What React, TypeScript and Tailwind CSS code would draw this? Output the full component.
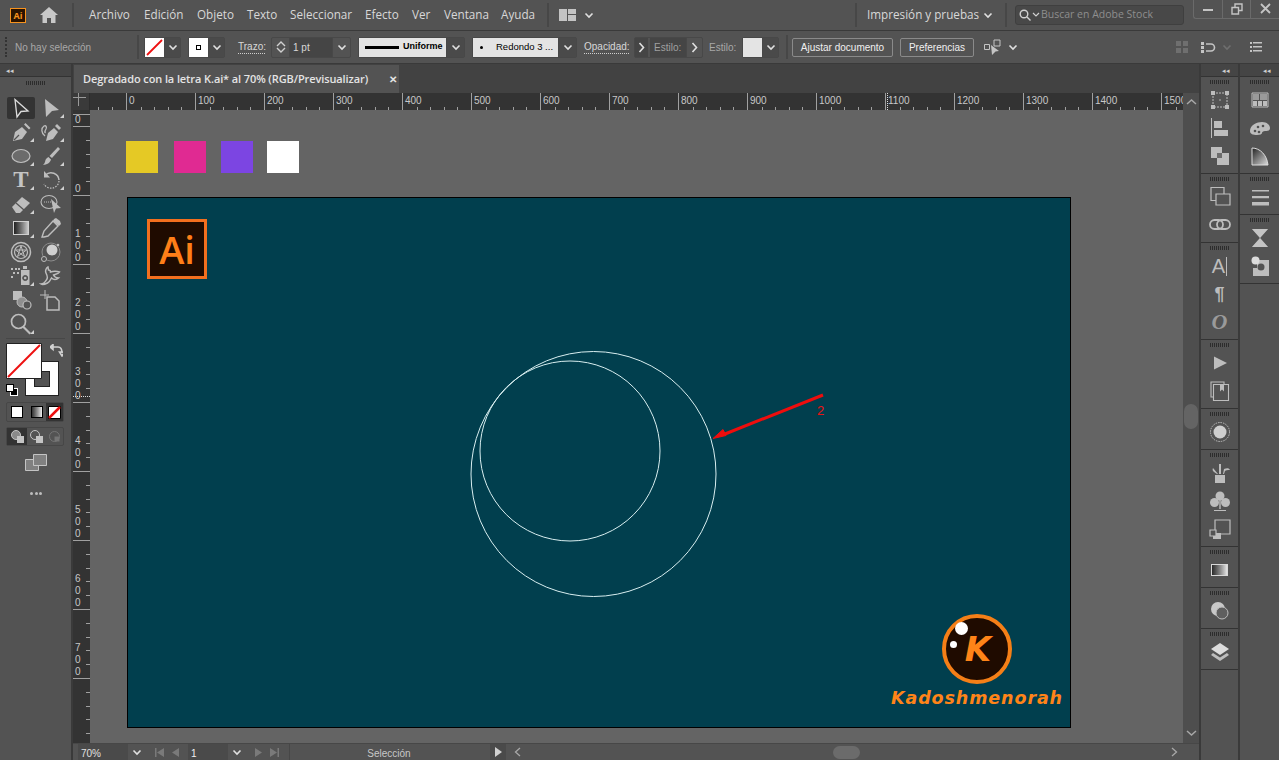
import type { ReactNode } from "react";

const G = "#bdbdbd";

const Chev = ({ color = "#e0e0e0" }: { color?: string }) => (
  <svg width="12" height="12" viewBox="0 0 12 12" fill="none" stroke={color} strokeWidth="1.6">
    <path d="M2.5 4.5 6 8l3.5-3.5" />
  </svg>
);

const Ico = ({ children, size = 24 }: { children: ReactNode; size?: number }) => (
  <svg width={size} height={size} viewBox="0 0 24 24" fill={G} stroke="none">
    {children}
  </svg>
);

const Grip = () => (
  <div className="flex justify-center gap-[1px] h-[9px] items-center shrink-0">
    {[0, 1, 2, 3, 4, 5, 6, 7, 8, 9].map((i) => (
      <span key={i} className="w-[1px] h-[4px] bg-[#2c2c2c]" />
    ))}
  </div>
);

const Sep = () => <div className="w-[2px] h-[24px] bg-[#474747] shrink-0" />;

// swatch + chevron dropdown of the control bar
const Drop = ({ className, children }: { className: string; children: ReactNode }) => (
  <div className={`flex h-[21px] border border-[#484848] rounded-[2px] shrink-0 ${className}`}>
    {children}
    <div className="w-[18px] flex items-center justify-center bg-[#4a4a4a] border-l border-[#484848]">
      <Chev />
    </div>
  </div>
);

const tools: { icon: ReactNode; tri?: boolean; active?: boolean }[] = [
  {
    active: true,
    icon: (
      <Ico>
        <path d="M6 3.5 19 15l-7 .5L8 21Z" fill="#333" stroke="#dcdcdc" strokeWidth="1.3" />
      </Ico>
    ),
  },
  { tri: true, icon: <Ico><path d="M6 3 20 14l-7 1-6 6Z" /></Ico> },
  {
    tri: true,
    icon: (
      <Ico>
        <path d="M4 21 6 12l7-5 5 5-5 7Z" />
        <path d="m15 4.500 1.500-1.500 5 5-1.500 1.500Z" />
        <path d="m5 20 5-5" stroke="#535353" strokeWidth="1.2" />
      </Ico>
    ),
  },
  {
    tri: true,
    icon: (
      <Ico>
        <path d="M7 21 9 13l6-5 4 4-5 7Z" />
        <path d="m16 6 2-2 4 4-2 2Z" />
        <path d="M6 16C2 13 2 8 5 6c2-1 3 1 2 3-1 1.500-2 3-.5 4" fill="none" stroke={G} strokeWidth="1.3" />
      </Ico>
    ),
  },
  {
    tri: true,
    icon: (
      <Ico>
        <ellipse cx="12" cy="12" rx="9" ry="6.500" fill="#6b6b6b" stroke={G} strokeWidth="1.2" />
      </Ico>
    ),
  },
  {
    tri: true,
    icon: (
      <Ico>
        <path d="M19 3 21 5 13 14 10.500 12Z" />
        <path d="M9.500 13 12 15.500C11 19 8 20.500 4 21c2-2 2-3 2.500-5 .5-1.500 2-2.500 3-3Z" />
      </Ico>
    ),
  },
  {
    tri: true,
    icon: (
      <span className="font-['Liberation_Serif',serif] font-bold text-[23px] leading-[24px] text-[#c4c4c4] w-6 text-center block">
        T
      </span>
    ),
  },
  {
    tri: true,
    icon: (
      <Ico>
        <path d="M6.500 7A8 8 0 0 1 20 12" fill="none" stroke={G} strokeWidth="1.500" />
        <path d="M20 13a8 8 0 0 1-15 3" fill="none" stroke={G} strokeWidth="1.300" strokeDasharray="1.500 1.300" />
        <path d="M5 3v6.500h6Z" />
      </Ico>
    ),
  },
  {
    tri: true,
    icon: (
      <Ico>
        <path d="m3 15 10-10 8 6-10 10H7Z" />
        <path d="m7 11 8 7" stroke="#535353" strokeWidth="1.2" />
      </Ico>
    ),
  },
  {
    icon: (
      <Ico>
        <ellipse cx="10" cy="10" rx="8" ry="6.500" fill="none" stroke={G} strokeWidth="1.1" />
        <path d="M5 10h9" stroke={G} strokeDasharray="1 1" />
        <path d="m12 7 10 9-5 .5L15 21Z" />
      </Ico>
    ),
  },
  {
    tri: true,
    icon: (
      <div className="w-[16px] h-[14px] mx-[4px] border border-[#d0d0d0] bg-gradient-to-r from-[#222222] to-[#c8c8c8]" />
    ),
  },
  {
    icon: (
      <Ico>
        <path d="m14 5 5 5L9 20l-4 1-2 0 1-3 1-3Z" fill="none" stroke={G} strokeWidth="1.4" />
        <path d="m15 3 2-1 4 3 1 3-2 2-6-5Z" />
      </Ico>
    ),
  },
  {
    icon: (
      <Ico>
        <circle cx="12" cy="12" r="9.500" fill="none" stroke={G} strokeWidth="1.5" />
        <circle cx="12" cy="12" r="6.500" fill="none" stroke={G} strokeWidth="1.2" />
        <path d="m12 6 3.500 10.500L6.500 10h11l-9 6.500Z" fill="none" stroke={G} strokeWidth="1" />
      </Ico>
    ),
  },
  {
    icon: (
      <Ico>
        <circle cx="12" cy="12" r="9" fill="none" stroke="#8c8c8c" strokeWidth="1" />
        <circle cx="13" cy="10" r="5.500" fill="#cfcfcf" />
        <circle cx="5" cy="19" r="2.500" fill="#535353" stroke={G} />
        <circle cx="19" cy="5" r="1.300" />
      </Ico>
    ),
  },
  {
    tri: true,
    icon: (
      <Ico>
        <path d="M14 2h4v3h-4Z" />
        <path d="M12 6h8.500v15H12Z" />
        <circle cx="16.200" cy="14" r="2.500" fill="#535353" stroke="#535353" />
        <circle cx="16.200" cy="14" r="1.300" />
        <path d="M2 4h2v2H2Zm4 0h2v2H6Zm3 0h2v2H9ZM4 8h2v2H4Zm4 0h2v2H8ZM2 12h2v2H2Z" />
      </Ico>
    ),
  },
  {
    icon: (
      <Ico>
        <path
          d="M2 20c3 0 4-2 6-5 1-2 0-4-1-6-1-2 0-5 2-6l.5 3c1 0 2 1 2 2 3-1 6-1 9 0-1 2-4 2-6 3 1 2 3 3 5 3-2 2-5 2-7 0-1 2-2 4-4 5-2 1-5 2-6.500 1Z"
          fill="none"
          stroke={G}
          strokeWidth="1.500"
        />
      </Ico>
    ),
  },
  {
    icon: (
      <Ico>
        <path d="M4 3h9v9H4Z" />
        <circle cx="13" cy="14" r="5" fill="#8f8f8f" stroke={G} />
        <circle cx="18" cy="17" r="4" fill="#535353" stroke={G} strokeWidth="1.200" />
      </Ico>
    ),
  },
  {
    icon: (
      <Ico>
        <path d="M8 9h8l4 4v9H8Z" fill="none" stroke={G} strokeWidth="1.500" />
        <path d="M1 7h9M6 2v9" stroke={G} strokeWidth="1" fill="none" />
      </Ico>
    ),
  },
  {
    tri: true,
    icon: (
      <Ico>
        <circle cx="9.500" cy="9.500" r="7" fill="none" stroke={G} strokeWidth="1.700" />
        <path d="m15 14 7 7-1.500 1.500-7-7Z" />
      </Ico>
    ),
  },
];

const panelOne: ReactNode[][] = [
  [
    <Ico key="tr">
      <path d="M5 5h14v14H5Z" fill="none" stroke={G} strokeWidth="1" strokeDasharray="2 1" />
      <path d="M3 3h4v4H3Zm14 0h4v4h-4ZM3 17h4v4H3Zm14 0h4v4h-4Z" />
      <circle cx="12" cy="12" r="0.800" />
    </Ico>,
    <Ico key="al">
      <path d="M3 2h1v20H3Z" />
      <path d="M6 5h8v7H6Zm0 9h14v6H6Z" />
    </Ico>,
    <Ico key="pf">
      <path d="M3 3h11v11H3Z" />
      <path d="M9 9h12v12H9Z" fill="#bdbdbd" />
      <path d="M9 9h5v5H9Z" fill="#6d6d6d" />
    </Ico>,
  ],
  [
    <Ico key="ap">
      <path d="M3 2.500h13v13H3Z" fill="none" stroke={G} strokeWidth="1.200" />
      <path d="M8 9h14v11H8Z" fill="#535353" stroke={G} strokeWidth="1.200" />
    </Ico>,
    <Ico key="ln">
      <rect x="2" y="7" width="13" height="9" rx="4.500" fill="none" stroke={G} strokeWidth="1.800" />
      <rect x="9" y="7" width="13" height="9" rx="4.500" fill="none" stroke={G} strokeWidth="1.800" />
    </Ico>,
  ],
  [
    <div key="a" className="flex items-center justify-center w-6 h-6">
      <span className="font-['Liberation_Sans',sans-serif] text-[20px] leading-none text-[#bdbdbd]">A</span>
      <span className="w-[1px] h-[19px] bg-[#bdbdbd] ml-[1px]" />
    </div>,
    <span key="p" className="font-['Liberation_Sans',sans-serif] font-bold text-[18px] leading-[24px] text-[#bdbdbd] w-6 text-center block">
      ¶
    </span>,
    <span key="o" className="font-['Liberation_Serif',serif] italic font-bold text-[22px] leading-[24px] text-[#9a9a9a] w-6 text-center block">
      O
    </span>,
  ],
  [
    <Ico key="pl">
      <path d="M6 5.500 19 12 6 18.500Z" />
    </Ico>,
    <Ico key="ab">
      <path d="M3 3h13v15H3Z" fill="none" stroke={G} strokeWidth="1.100" />
      <path d="M5.500 5.500h15v16h-15Z" fill="#535353" stroke={G} strokeWidth="1.100" />
      <path d="M12 5.500h4v7l-2-2-2 2Z" />
    </Ico>,
  ],
  [
    <Ico key="dc">
      <circle cx="12" cy="12" r="6.500" fill="#cfcfcf" />
      <circle cx="12" cy="12" r="9.500" fill="none" stroke={G} strokeDasharray="1.500 1" />
    </Ico>,
  ],
  [
    <Ico key="br">
      <path d="M7 14h10v8H7Z" />
      <path d="M11 13V3h2v10Zm-1 0L5 7c-1 2 0 3 1 4l3 2Zm5 0 1-5c3-1 5-1 6 1-3 0-4 0-5 1l-1 3Z" />
    </Ico>,
    <Ico key="cl">
      <circle cx="12" cy="7" r="4.500" />
      <circle cx="6.500" cy="13.500" r="4.500" />
      <circle cx="17.500" cy="13.500" r="4.500" />
      <path d="M11.300 10h1.400v10h-1.400ZM6 21h12v1H6Z" />
    </Ico>,
    <Ico key="ar">
      <path d="M7 3h15v14H7Z" fill="none" stroke={G} strokeWidth="1.200" />
      <path d="M5 16h8v6H5Z" fill={G} />
      <path d="M2 13h6v6H2Z" fill="#535353" stroke={G} strokeWidth="1.200" />
    </Ico>,
  ],
  [
    <div key="gr" className="w-[17px] h-[12px] mx-[3.500px] border border-[#d8d8d8] bg-gradient-to-r from-[#2a2a2a] to-[#e4e4e4]" />,
  ],
  [
    <Ico key="tp">
      <circle cx="10" cy="10" r="7" fill="#c8c8c8" />
      <circle cx="14" cy="14" r="6" fill="#5f5f5f" stroke={G} strokeWidth="1" />
    </Ico>,
  ],
  [
    <Ico key="ly">
      <path d="m12 3 9 6-9 6-9-6Z" fill="#dcdcdc" />
      <path d="m5 13-2 2 9 6 9-6-2-2-7 4.500Z" />
    </Ico>,
  ],
];

const panelTwo: ReactNode[][] = [
  [
    <Ico key="sw">
      <path d="M4 5h16v14H4Z" fill="none" stroke={G} />
      <path d="M5 6h6v6H5Zm7 0h7v6h-7Z" fill="#9a9a9a" />
      <path d="M5 13h4v5H5Zm5 0h4v5h-4Zm5 0h4v5h-4Z" />
    </Ico>,
    <Ico key="pa">
      <path d="M2 15c0-6 7-9 12-9 5 0 8 3 8 6 0 3-3 3-5 3-2 0-3 1-3 2s-2 2-5 2c-4 0-7-1-7-4Z" />
      <circle cx="7" cy="15" r="1.300" fill="#535353" />
      <circle cx="10" cy="11" r="1.300" fill="#535353" />
      <circle cx="15" cy="10" r="1.300" fill="#535353" />
      <circle cx="11" cy="16" r="1.300" fill="#535353" />
    </Ico>,
    <svg key="cg" width="24" height="24" viewBox="0 0 24 24">
      <defs>
        <linearGradient id="cg1" x1="0" y1="0" x2="1" y2="1">
          <stop offset="0" stopColor="#202020" />
          <stop offset="1" stopColor="#dddddd" />
        </linearGradient>
      </defs>
      <path d="M4 4c8 0 15 7 16 17H4Z" fill="url(#cg1)" stroke="#dddddd" strokeWidth="1" />
    </svg>,
  ],
  [
    <Ico key="st">
      <path d="M4 5h17v1.500H4Zm0 6h17v2.200H4Zm0 6h17v3.500H4Z" />
    </Ico>,
  ],
  [
    <Ico key="hg">
      <path d="M4 3h16v18H4Z" fill="#8a8a8a" />
      <path d="m4 3 8 9-8 9Zm16 0-8 9 8 9Z" fill="#535353" />
      <path d="M4 3h16l-8 9Zm0 18h16l-8-9Z" fill="#c4c4c4" />
    </Ico>,
    <Ico key="om">
      <path d="M9 6h12v16H5v-8h4Z" />
      <circle cx="7.500" cy="6.500" r="4" fill="#dcdcdc" />
      <circle cx="13" cy="13" r="3.500" fill="#535353" />
    </Ico>,
  ],
];

const PanelCol = ({ groups }: { groups: ReactNode[][] }) => (
  <div className="w-[39px] flex flex-col">
    <div className="h-[13px] shrink-0 flex items-center justify-end pr-2 bg-[#454545] text-[#cfcfcf] text-[7px] leading-none border-b border-[#333333]">
      ◂◂
    </div>
    {groups.map((g, i) => (
      <div key={i} className="border-b border-[#333333] flex flex-col items-center shrink-0 pb-[3px]">
        <Grip />
        {g.map((ic, k) => (
          <div key={k} className="h-[28px] w-full flex items-center justify-center">
            {ic}
          </div>
        ))}
      </div>
    ))}
  </div>
);

const hLabels = [0, 100, 200, 300, 400, 500, 600, 700, 800, 900, 1000, 1100, 1200, 1300, 1400, 1500];
const vLabels = ["0", "100", "200", "300", "400", "500", "600", "700", ""];

export default function App() {
  return (
    <div className="w-[1279px] h-[760px] flex flex-col bg-[#535353] overflow-hidden text-[#d8d8d8] font-['Open_Sans',sans-serif]">
      {/* menu */}
      <div className="h-[31px] flex items-center pl-[10px] border-b border-[#3a3a3a] shrink-0 text-[11.7px] whitespace-nowrap relative">
        <div className="w-[16px] h-[15px] border border-[#f7931e] bg-[#2a1300] text-[#f7931e] text-[9px] font-bold leading-[13px] text-center">Ai</div>
        <svg className="ml-[14px]" width="18" height="16" viewBox="0 0 18 16" fill="#c8c8c8">
          <path d="M9 0 18 8h-2.500v8H11v-5H7v5H2.500V8H0Z" />
        </svg>
        <div className="ml-[14px] mr-[15px]"><Sep /></div>
        <div className="w-[55px]">Archivo</div>
        <div className="w-[53px]">Edición</div>
        <div className="w-[50px]">Objeto</div>
        <div className="w-[43px]">Texto</div>
        <div className="w-[75px]">Seleccionar</div>
        <div className="w-[47px]">Efecto</div>
        <div className="w-[32px]">Ver</div>
        <div className="w-[57px]">Ventana</div>
        <div className="w-[46px]">Ayuda</div>
        <Sep />
        <svg className="ml-[10px]" width="17" height="12" viewBox="0 0 17 12" fill="#c4c4c4">
          <path d="M0 0h8v12H0Zm9 0h8v5H9Zm0 6h8v6H9Z" />
        </svg>
        <div className="ml-[7px]"><Chev /></div>
        <div className="flex-1" />
        <Sep />
        <div className="ml-[10px] w-[109px]">Impresión y pruebas</div>
        <div className="ml-[6px]"><Chev /></div>
        <div className="ml-[11px]"><Sep /></div>
        <div className="ml-[8px] w-[169px] h-[20px] flex items-center gap-[1px] pl-[3px] bg-[#484848] border border-[#3f3f3f] rounded-[3px] text-[#8e8e8e] text-[10.500px]">
          <svg width="12" height="12" viewBox="0 0 12 12" fill="none" stroke="#d0d0d0" strokeWidth="1.400"><circle cx="5" cy="5" r="3.800" /><path d="m8 8 3.500 3.500" /></svg>
          <svg width="8" height="8" viewBox="0 0 8 8" fill="none" stroke="#d0d0d0" strokeWidth="1.200"><path d="m1 2 3 3 3-3" /></svg>
          Buscar en Adobe Stock
        </div>
        <div className="ml-[9px] mb-[12px] w-[86px] h-[19px] flex border border-t-0 border-r-0 border-[#6a6a6a] rounded-bl-[3px]">
          <div className="flex-1 flex items-center justify-center border-r border-[#6a6a6a]"><div className="w-[10px] h-[2px] mt-[3px] bg-[#c4c4c4]" /></div>
          <div className="flex-1 flex items-center justify-center border-r border-[#6a6a6a]">
            <svg width="12" height="12" viewBox="0 0 12 12" fill="none" stroke="#c4c4c4" strokeWidth="1.400"><path d="M1 4.500h6.500V11H1ZM4 4V1h7v6.500H8" /></svg>
          </div>
          <div className="flex-1 flex items-center justify-center">
            <svg width="11" height="11" viewBox="0 0 11 11" fill="none" stroke="#c4c4c4" strokeWidth="1.800"><path d="m1 1 9 9M10 1l-9 9" /></svg>
          </div>
        </div>
      </div>

      {/* control bar */}
      <div className="h-[33px] flex items-center pl-[5px] border-b border-[#3a3a3a] shrink-0 text-[10px] whitespace-nowrap font-['Liberation_Sans',sans-serif]">
        <div className="w-[2px] h-[20px] border-l-2 border-dotted border-[#333333]" />
        <div className="ml-[8px] w-[122px] text-[#a8a8a8]">No hay selección</div>
        <Sep />
        <Drop className="ml-[5px] w-[37px]">
          <svg className="shrink-0" width="19" height="19" viewBox="0 0 19 19"><path d="M0 0h19v19H0Z" fill="#fff" /><path d="M2 17 17 2" stroke="#ee1111" strokeWidth="1.800" /></svg>
        </Drop>
        <Drop className="ml-[7px] w-[37px]">
          <div className="w-[19px] h-[19px] bg-white flex items-center justify-center shrink-0">
            <div className="w-[5px] h-[5px] border border-black" />
          </div>
        </Drop>
        <div className="ml-[13px] w-[27px] border-b border-dotted border-[#cfcfcf] leading-[12px]">Trazo:</div>
        <div className="ml-[6px] w-[80px] h-[21px] flex border border-[#484848] rounded-[2px] shrink-0">
          <div className="w-[18px] flex flex-col items-center justify-center border-r border-[#484848] -space-y-[2px]">
            <svg width="10" height="8" viewBox="0 0 10 8" fill="none" stroke="#d0d0d0" strokeWidth="1.400"><path d="m1 6 4-4 4 4" /></svg>
            <svg width="10" height="8" viewBox="0 0 10 8" fill="none" stroke="#d0d0d0" strokeWidth="1.400"><path d="m1 2 4 4 4-4" /></svg>
          </div>
          <div className="flex-1 pl-[3px] bg-[#454545] leading-[19px]">1 pt</div>
          <div className="w-[18px] flex items-center justify-center border-l border-[#484848]"><Chev /></div>
        </div>
        <Drop className="ml-[7px] w-[107px]">
          <div className="flex-1 bg-[#e4e4e4] flex items-center pl-[6px] gap-[4px] text-black font-bold text-[9px]">
            <div className="w-[34px] h-[3px] bg-black" />
            Uniforme
          </div>
        </Drop>
        <Drop className="ml-[7px] w-[105px]">
          <div className="flex-1 bg-[#e4e4e4] flex items-center pl-[7px] text-black text-[9.500px]">
            <div className="w-[3px] h-[3px] rounded-full bg-black mr-[13px]" />
            Redondo 3 ...
          </div>
        </Drop>
        <div className="ml-[7px] w-[45px] border-b border-dotted border-[#cfcfcf] leading-[12px]">Opacidad:</div>
        <div className="ml-[5px] w-[69px] h-[21px] flex items-center border border-[#484848] rounded-[2px] shrink-0">
          <div className="w-[13px] h-full bg-[#454545] flex items-center justify-center">
            <svg width="7" height="11" viewBox="0 0 7 11" fill="none" stroke="#e0e0e0" strokeWidth="1.600"><path d="m1.500 1 4 4.500-4 4.500" /></svg>
          </div>
          <div className="w-[38px] h-full bg-[#454545] border-l-2 border-[#535353] text-[#a0a0a0] pl-[4px] leading-[19px]">Estilo:</div>
          <div className="flex-1 flex items-center justify-center border-l border-[#484848] h-full">
            <svg width="7" height="11" viewBox="0 0 7 11" fill="none" stroke="#e0e0e0" strokeWidth="1.600"><path d="m1.500 1 4 4.500-4 4.500" /></svg>
          </div>
        </div>
        <div className="ml-[6px] w-[26px] text-[#a8a8a8]">Estilo:</div>
        <Drop className="ml-[7px] w-[37px]">
          <div className="w-[19px] bg-[#e4e4e4] shrink-0" />
        </Drop>
        <div className="ml-[7px]"><Sep /></div>
        <div className="ml-[4px] w-[101px] h-[19px] border border-[#8a8a8a] rounded-[2px] text-center leading-[17px] text-[#f0f0f0] shrink-0">Ajustar documento</div>
        <div className="ml-[7px] w-[74px] h-[19px] border border-[#8a8a8a] rounded-[2px] text-center leading-[17px] text-[#f0f0f0] shrink-0">Preferencias</div>
        <svg className="ml-[10px]" width="17" height="18" viewBox="0 0 17 18" fill="none" stroke="#c4c4c4">
          <path d="M0.500 6.500h5v5h-5ZM10 2h6v6h-6Z" />
          <path d="m7 7 8 6-3.500.5L8 17Z" fill="#c4c4c4" stroke="none" />
        </svg>
        <div className="ml-[6px]"><Chev /></div>
        <div className="flex-1" />
        <svg width="12" height="12" viewBox="0 0 12 12" fill="#6f6f6f"><path d="M0 0h5v5H0Zm7 0h5v5H7ZM0 7h5v5H0Zm7 0h5v5H7Z" /></svg>
        <svg className="ml-[13px]" width="15" height="13" viewBox="0 0 15 13" fill="#c4c4c4"><path d="M0 1h3v3H0Zm0 4h3v3H0Zm0 4h3v3H0Z" /><path d="M5 3h5a3.500 3.500 0 0 1 0 7H5" fill="none" stroke="#c4c4c4" strokeWidth="1.600" /></svg>
        <div className="ml-[5px]"><Chev color="#6f6f6f" /></div>
        <svg className="ml-[17px] mr-[17px]" width="12" height="10" viewBox="0 0 12 10" fill="#c4c4c4"><path d="M0 0h2v2H0Zm3 0h9v1.500H3ZM0 4h2v2H0Zm3 0h9v1.500H3ZM0 8h2v2H0Zm3 0h9v1.500H3Z" /></svg>
      </div>

      <div className="flex-1 flex min-h-0">
        {/* tools */}
        <div className="w-[73px] shrink-0 flex flex-col border-r-2 border-[#3a3a3a] bg-[#535353]">
          <div className="h-[13px] shrink-0 flex items-center pl-[6px] bg-[#454545] text-[#cfcfcf] text-[7px] leading-none border-b border-[#333333]">◂◂</div>
          <div className="h-[19px] shrink-0 pt-[1px]"><Grip /></div>
          <div className="grid grid-cols-[30px_30px] pl-[6px] auto-rows-[24px]">
            {tools.map((t, i) => (
              <div key={i} className="relative flex items-center justify-center">
                {t.active && <div className="absolute left-[1px] top-[1px] w-[28px] h-[22px] bg-[#333333] rounded-[2px]" />}
                <div className="relative">{t.icon}</div>
                {t.tri && <div className="absolute right-[2px] bottom-[2px] w-0 h-0 border-l-[4px] border-l-transparent border-b-[4px] border-b-[#d0d0d0]" />}
              </div>
            ))}
          </div>
          <div className="mt-[2px] mx-[6px] h-[1px] bg-[#474747]" />
          {/* fill / stroke */}
          <div className="relative h-[58px] mt-[4px] shrink-0">
            <div className="absolute left-[25px] top-[18px] w-[34px] h-[35px] bg-white border border-[#222222] flex items-center justify-center">
              <div className="w-[16px] h-[16px] bg-[#535353] border border-[#222222]" />
            </div>
            <svg className="absolute left-[6px] top-0" width="36" height="36" viewBox="0 0 36 36">
              <path d="M.5.500h35v35H.500Z" fill="#fff" stroke="#222" />
              <path d="M2 34 34 2" stroke="#ee1111" strokeWidth="2" />
            </svg>
            <svg className="absolute left-[50px] top-[1px]" width="13" height="13" viewBox="0 0 13 13" fill="none" stroke="#d0d0d0" strokeWidth="1.600">
              <path d="M1 3h7c3 0 4 2 4 6M0 3l3-2.500V5.500ZM9.500 8h5L12 12Z" />
            </svg>
            <div className="absolute left-[6px] top-[41px] w-[12px] h-[12px]">
              <div className="absolute right-0 bottom-0 w-[8px] h-[8px] bg-black border border-white" />
              <div className="absolute left-0 top-0 w-[8px] h-[8px] bg-white border border-black" />
            </div>
          </div>
          <div className="mt-[1px] ml-[6px] w-[58px] h-[20px] flex border border-[#474747] rounded-[2px] shrink-0">
            <div className="w-[20px] flex items-center justify-center">
              <div className="w-[12px] h-[12px] bg-white border border-black" />
            </div>
            <div className="w-[19px] flex items-center justify-center">
              <div className="w-[12px] h-[12px] border border-black bg-gradient-to-r from-[#333333] to-[#eeeeee]" />
            </div>
            <div className="flex-1 flex items-center justify-center bg-[#333333]">
              <svg width="13" height="13" viewBox="0 0 13 13"><path d="M.5.500h12v12H.500Z" fill="#fff" stroke="#000" /><path d="M1 12 12 1" stroke="#ee1111" strokeWidth="2.500" /></svg>
            </div>
          </div>
          <div className="mt-[5px] ml-[6px] w-[58px] h-[19px] flex border border-[#474747] rounded-[2px] shrink-0">
            <div className="w-[20px] flex items-center justify-center bg-[#333333]">
              <svg width="13" height="13" viewBox="0 0 13 13"><circle cx="5" cy="5" r="4.500" fill="#8a8a8a" stroke="#c4c4c4" /><path d="M6 6h7v7H6Z" fill="#c4c4c4" /></svg>
            </div>
            <div className="w-[19px] flex items-center justify-center">
              <svg width="13" height="13" viewBox="0 0 13 13"><circle cx="5" cy="5" r="4.500" fill="none" stroke="#c4c4c4" /><path d="M6 6h7v7H6Z" fill="#c4c4c4" /></svg>
            </div>
            <div className="flex-1 flex items-center justify-center">
              <svg width="11" height="11" viewBox="0 0 11 11"><circle cx="5.500" cy="5.500" r="5" fill="none" stroke="#757575" /><path d="M5.500 5.500h5v5h-5Z" fill="#757575" /></svg>
            </div>
          </div>
          <svg className="mt-[8px] ml-[25px] shrink-0" width="22" height="17" viewBox="0 0 22 17" fill="#808080" stroke="#c4c4c4" strokeWidth="1">
            <path d="M.5 5.500h13v11H.500Z" />
            <path d="M8.500.5h13v11h-13Z" />
          </svg>
          <div className="mt-[21px] ml-[30px] flex gap-[1.500px] shrink-0">
            <span className="w-[3px] h-[3px] rounded-full bg-[#bdbdbd]" />
            <span className="w-[3px] h-[3px] rounded-full bg-[#bdbdbd]" />
            <span className="w-[3px] h-[3px] rounded-full bg-[#bdbdbd]" />
          </div>
        </div>

        {/* document */}
        <div className="flex-1 min-w-0 flex flex-col bg-[#424242]">
          <div className="h-[29px] pt-[1px] pl-[1px] flex shrink-0">
            <div className="w-[325px] h-[28px] bg-[#535353] flex items-center pl-[9px] text-[11px] font-semibold tracking-[-0.1px] text-[#e4e4e4]">
              <span className="w-[306px] whitespace-nowrap">Degradado con la letra K.ai* al 70% (RGB/Previsualizar)</span>
              <span className="text-[10px] font-bold leading-none">✕</span>
            </div>
          </div>

          {/* horizontal ruler */}
          <div className="h-[17px] flex shrink-0">
            <div className="w-[17px] bg-[#3a3a3a] relative border-r border-[#2d2d2d]">
              <div className="absolute left-[5px] top-0 w-[1px] h-[13px] bg-[#9a9a9a]" />
              <div className="absolute left-0 top-[4px] w-[13px] h-[1px] bg-[#9a9a9a]" />
            </div>
            <div className="flex-1 min-w-0 bg-[#333333] flex overflow-hidden relative">
              <div className="w-[36px] shrink-0 flex items-end justify-end h-full">
                <span className="w-[13.800px] h-[3px] border-l border-[#a0a0a0]" />
                <span className="w-[13.800px] h-[3px] border-l border-[#a0a0a0]" />
              </div>
              {hLabels.map((n) => (
                <div key={n} className="w-[69px] shrink-0 h-full border-l border-[#a0a0a0] flex flex-col">
                  <span className="pl-[2px] pt-[1px] text-[10px] leading-[13px] text-[#c8c8c8] flex-1 font-['Liberation_Sans',sans-serif]">{n}</span>
                  <div className="flex h-[3px] pl-[13.800px]">
                    <span className="w-[13.800px] border-l border-[#a0a0a0]" />
                    <span className="w-[13.800px] border-l border-[#a0a0a0]" />
                    <span className="w-[13.800px] border-l border-[#a0a0a0]" />
                    <span className="w-[13.800px] border-l border-[#a0a0a0]" />
                  </div>
                </div>
              ))}
              <div className="absolute left-[797px] top-0 h-full border-l border-dotted border-[#dddddd]" />
            </div>
            <div className="w-[16px] bg-[#4e4e4e] flex items-center justify-center">
              <svg width="11" height="8" viewBox="0 0 11 8" fill="none" stroke="#a8a8a8" strokeWidth="1.500"><path d="m1 6 4.500-4L10 6" /></svg>
            </div>
          </div>

          <div className="flex-1 min-h-0 flex">
            {/* vertical ruler */}
            <div className="w-[17px] shrink-0 bg-[#333333] overflow-hidden relative flex flex-col text-[10px] leading-[12px] text-[#c8c8c8] font-['Liberation_Sans',sans-serif]">
              <div className="h-[4px] shrink-0" />
              <div className="h-[13px] shrink-0 border-t border-b border-[#a0a0a0] pl-[2px] flex items-end">0</div>
              {vLabels.map((n, idx) => (
                <div key={idx} className="h-[69px] shrink-0 border-b border-[#a0a0a0] flex justify-between">
                  <div className="flex flex-col justify-end pl-[2px]">
                    {n.split("").map((d, i) => (
                      <span key={i}>{d}</span>
                    ))}
                  </div>
                  <div className="flex flex-col w-[4px]">
                    <span className="h-[13.800px] border-b border-[#a0a0a0]" />
                    <span className="h-[13.800px] border-b border-[#a0a0a0]" />
                    <span className="h-[13.800px] border-b border-[#a0a0a0]" />
                    <span className="h-[13.800px] border-b border-[#a0a0a0]" />
                  </div>
                </div>
              ))}
              <div className="absolute left-0 top-[286px] w-full border-t border-dotted border-[#dddddd]" />
            </div>

            {/* canvas */}
            <div className="flex-1 min-w-0 bg-[#646464] relative overflow-hidden">
              <div className="absolute left-[36px] top-[31px] w-[32px] h-[32px] bg-[#e5c925]" />
              <div className="absolute left-[84px] top-[31px] w-[32px] h-[32px] bg-[#e02a92]" />
              <div className="absolute left-[131px] top-[31px] w-[32px] h-[32px] bg-[#7c45e2]" />
              <div className="absolute left-[177px] top-[31px] w-[32px] h-[32px] bg-white" />

              <div className="absolute left-[37px] top-[87px] w-[944px] h-[531px] bg-[#013f4e] border border-black">
                <div className="absolute left-[19px] top-[21px] w-[60px] h-[60px] bg-[#1f0b00] border-[3px] border-[#f26f1e] flex items-center justify-center text-[#ff7f18] text-[38px] leading-none font-semibold font-['Open_Sans',sans-serif]">
                  Ai
                </div>
                <svg className="absolute left-0 top-0" width="942" height="529" viewBox="0 0 942 529" fill="none">
                  <circle cx="465.500" cy="276" r="122.500" stroke="#d8eef0" strokeWidth="1" />
                  <circle cx="442" cy="253" r="90" stroke="#d8eef0" strokeWidth="1" />
                  <path d="M695 197 597 236" stroke="#ee0d0d" strokeWidth="3" />
                  <path d="M585 240.500 595 231.500 598 237.500Z" fill="#ee0d0d" stroke="#ee0d0d" />
                </svg>
                <span className="absolute left-[689px] top-[205px] text-[13px] leading-[16px] text-[#ee1111] font-['Liberation_Sans',sans-serif]">2</span>

                <div className="absolute left-[814px] top-[416px] w-[70px] h-[70px] rounded-full bg-[#1f0b00] border-[4px] border-[#f57f17] flex items-center justify-center">
                  <span className="text-[#ff8418] text-[34px] leading-none font-bold italic font-['DejaVu_Sans',sans-serif] ml-[2px]">K</span>
                </div>
                <div className="absolute left-[827px] top-[424px] w-[13px] h-[13px] rounded-full bg-white" />
                <div className="absolute left-[822px] top-[443px] w-[7px] h-[7px] rounded-full bg-white" />
                <span className="absolute left-[763px] top-[488px] text-[17.500px] leading-[24px] font-bold italic tracking-[0.9px] text-[#ff8418] whitespace-nowrap font-['DejaVu_Sans',sans-serif]">
                  Kadoshmenorah
                </span>
              </div>
            </div>

            {/* v scroll */}
            <div className="w-[16px] shrink-0 bg-[#4e4e4e] pt-[294px] flex flex-col items-center">
              <div className="h-[25px] w-[14px] rounded-[7px] bg-[#646464]" />
              <div className="flex-1" />
              <svg className="mb-[6px]" width="11" height="8" viewBox="0 0 11 8" fill="none" stroke="#a8a8a8" strokeWidth="1.500"><path d="m1 2 4.500 4L10 2" /></svg>
            </div>
          </div>

          {/* status */}
          <div className="h-[17px] shrink-0 flex items-center bg-[#535353] border-t border-[#474747] text-[10px] font-['Liberation_Sans',sans-serif]">
            <div className="ml-[5px] w-[50px] h-full pl-[3px] bg-[#4a4a4a] leading-[19px] text-[#e0e0e0]">70%</div>
            <div className="w-[18px] flex justify-center"><Chev /></div>
            <svg className="ml-[9px]" width="24" height="9" viewBox="0 0 24 9" fill="#7a7a7a"><path d="M0 0h1.500v9H0Zm9 0v9L2 4.500ZM24 0v9l-7-4.500Z" /></svg>
            <div className="ml-[9px] w-[40px] h-full pl-[3px] bg-[#4a4a4a] leading-[19px] text-[#f0f0f0]">1</div>
            <div className="w-[18px] flex justify-center"><Chev /></div>
            <svg className="ml-[9px]" width="24" height="9" viewBox="0 0 24 9" fill="#7a7a7a"><path d="M0 0v9l7-4.500ZM15 0v9l7-4.500ZM22.500 0H24v9h-1.500Z" /></svg>
            <div className="ml-[10px] w-[199px] h-full text-center leading-[19px] text-[#c8c8c8] border-l border-[#474747]">Selección</div>
            <div className="ml-[2px] w-[16px] h-full bg-[#4a4a4a] flex items-center justify-center">
              <svg width="7" height="10" viewBox="0 0 7 10" fill="#d0d0d0"><path d="M0 0v10l7-5Z" /></svg>
            </div>
            <svg className="ml-[8px]" width="7" height="10" viewBox="0 0 7 10" fill="none" stroke="#a8a8a8" strokeWidth="1.300"><path d="M6 1 1.500 5 6 9" /></svg>
            <div className="ml-[312px] w-[27px] h-[13px] rounded-[7px] bg-[#6b6b6b]" />
            <svg className="ml-[311px]" width="7" height="10" viewBox="0 0 7 10" fill="none" stroke="#a8a8a8" strokeWidth="1.300"><path d="m1 1 4.500 4L1 9" /></svg>
          </div>
        </div>

        {/* right panels */}
        <div className="w-[80px] shrink-0 flex border-l-2 border-[#3a3a3a] divide-x-2 divide-[#3a3a3a]">
          <PanelCol groups={panelOne} />
          <PanelCol groups={panelTwo} />
        </div>
      </div>
    </div>
  );
}
